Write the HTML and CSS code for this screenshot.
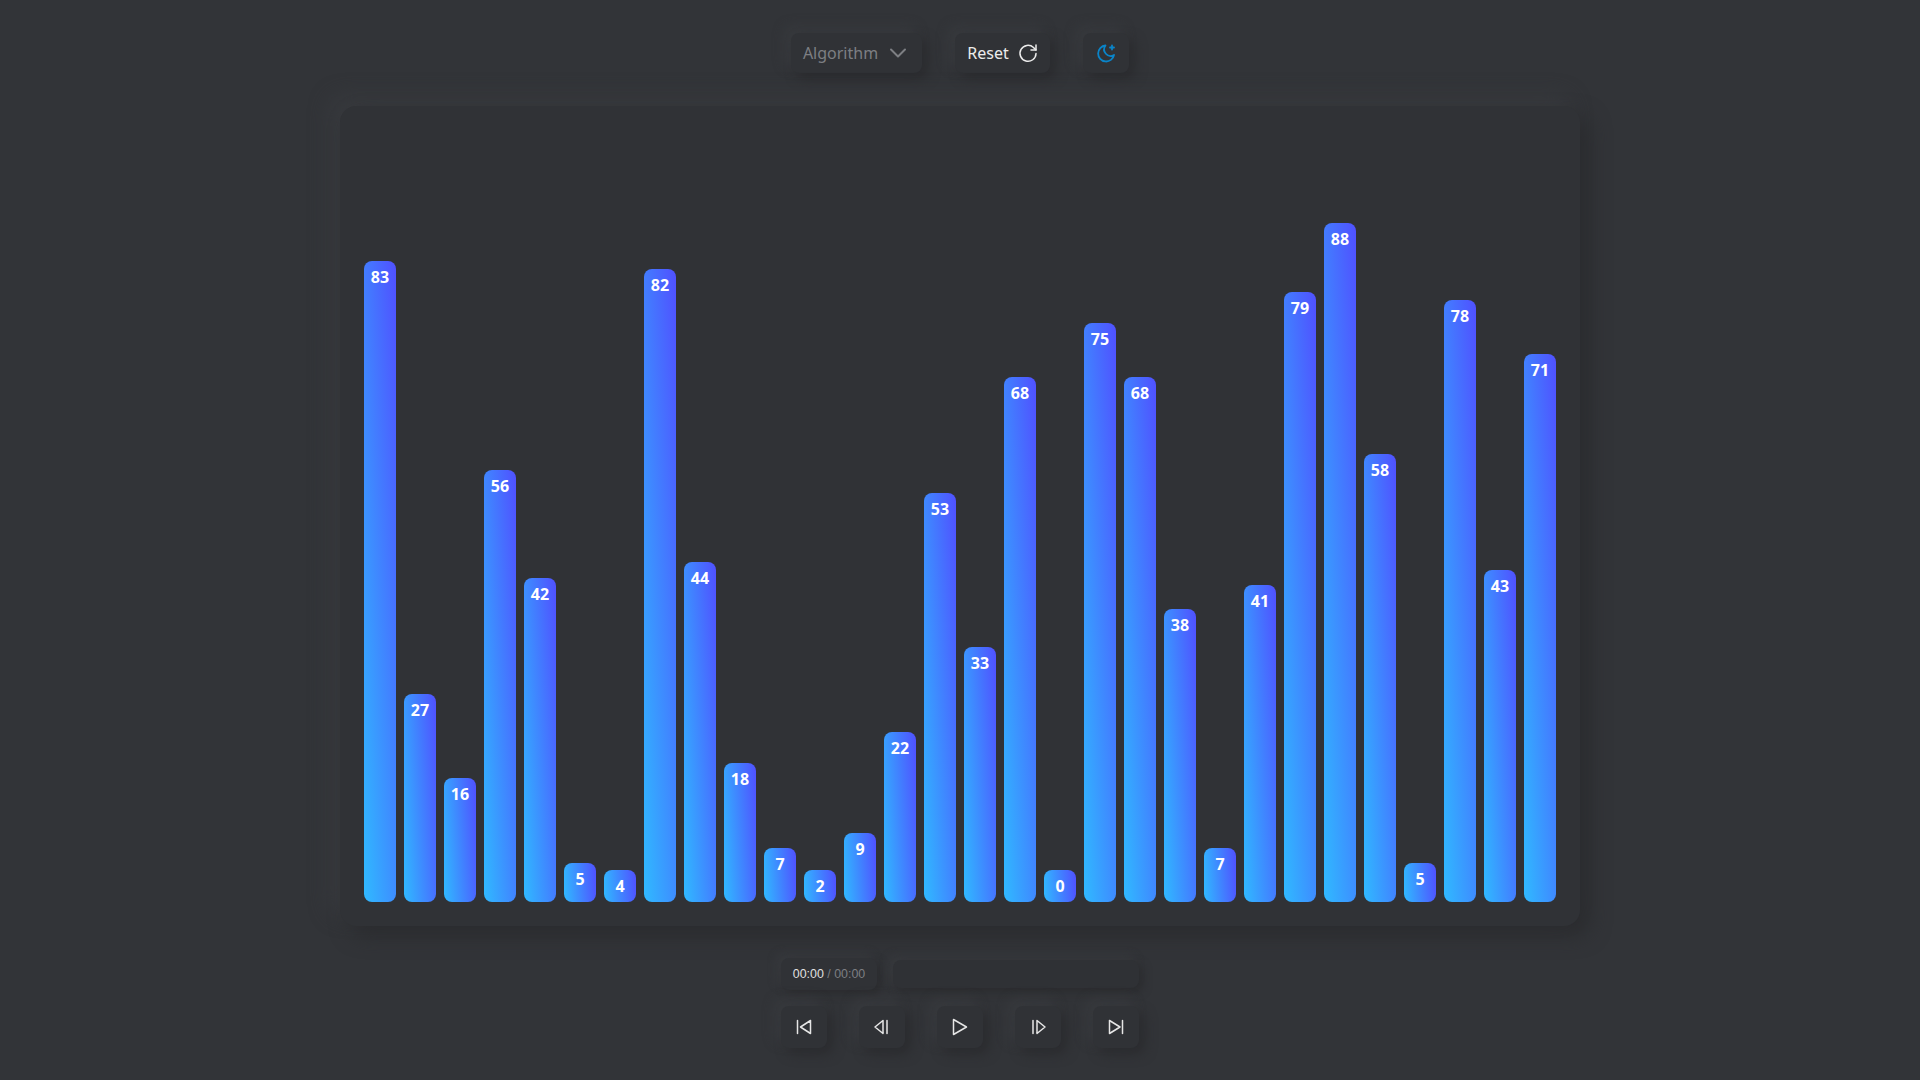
FILE: index.html
```html
<!doctype html>
<html lang="en">

<head>
    <title>Sorting Visualizer</title>
    <link rel="stylesheet" href="styles.css">
</head>

<body>
    <header class="toolbar">
        <div class="btn select">
            <span>Algorithm</span>
            <svg class="chevron" viewBox="0 0 24 24"><path d="M5 8.500l7 7 7-7" /></svg>
        </div>
        <div class="btn reset">
            <span>Reset</span>
            <svg class="reset-icon" viewBox="2 2 20 20">
                <path d="M20 12.500A8 8 0 1 1 17.500 6.500L20 9" />
                <path d="M20 4v5h-5" />
            </svg>
        </div>
        <div class="btn theme">
            <svg class="moon" viewBox="0 0 24 24">
                <path d="M11.500 4.500a8 8 0 1 0 8.500 9.500a6.500 6.500 0 0 1 -8.500 -9.500z" />
                <path d="M18 4.500v4M16 6.500h4" />
            </svg>
        </div>
    </header>

    <main class="panel" id="panel">
        <div class="bar" style="height:641px">83</div>
        <div class="bar" style="height:208px">27</div>
        <div class="bar" style="height:124px">16</div>
        <div class="bar" style="height:432px">56</div>
        <div class="bar" style="height:324px">42</div>
        <div class="bar" style="height:39px">5</div>
        <div class="bar" style="height:32px">4</div>
        <div class="bar" style="height:633px">82</div>
        <div class="bar" style="height:340px">44</div>
        <div class="bar" style="height:139px">18</div>
        <div class="bar" style="height:54px">7</div>
        <div class="bar" style="height:32px">2</div>
        <div class="bar" style="height:69px">9</div>
        <div class="bar" style="height:170px">22</div>
        <div class="bar" style="height:409px">53</div>
        <div class="bar" style="height:255px">33</div>
        <div class="bar" style="height:525px">68</div>
        <div class="bar" style="height:32px">0</div>
        <div class="bar" style="height:579px">75</div>
        <div class="bar" style="height:525px">68</div>
        <div class="bar" style="height:293px">38</div>
        <div class="bar" style="height:54px">7</div>
        <div class="bar" style="height:317px">41</div>
        <div class="bar" style="height:610px">79</div>
        <div class="bar" style="height:679px">88</div>
        <div class="bar" style="height:448px">58</div>
        <div class="bar" style="height:39px">5</div>
        <div class="bar" style="height:602px">78</div>
        <div class="bar" style="height:332px">43</div>
        <div class="bar" style="height:548px">71</div>
    </main>

    <footer class="player">
        <div class="progress-row">
            <div class="time"><span class="current">00:00</span> / 00:00</div>
            <div class="progress"></div>
        </div>
        <div class="controls">
            <div class="btn ctrl"><svg viewBox="0 0 24 24"><path d="M5.500 5.500v13M18.500 5.500v13l-10 -6.500z" /></svg></div>
            <div class="btn ctrl"><svg viewBox="0 0 24 24"><path d="M13 5.500v13l-8 -6.500zM17 5.500v13" /></svg></div>
            <div class="btn ctrl"><svg viewBox="0 0 24 24"><path d="M5.500 4.500v15l13 -7.500z" /></svg></div>
            <div class="btn ctrl"><svg viewBox="0 0 24 24"><path d="M11 5.500v13l8 -6.500zM7 5.500v13" /></svg></div>
            <div class="btn ctrl"><svg viewBox="0 0 24 24"><path d="M5.500 5.500v13l10.500 -6.500zM18.500 5.500v13" /></svg></div>
        </div>
    </footer>
</body>

</html>
```

FILE: styles.css
```css
* {
    box-sizing: border-box;
}

body {
    margin: 0;
    height: 1080px;
    overflow: hidden;
    background-color: #323438;
    font-family: "Noto Sans", sans-serif;
    color: #ececec;
    display: flex;
    flex-direction: column;
    align-items: center;
}

.btn {
    display: flex;
    align-items: center;
    justify-content: center;
    background-color: #303236;
    border-radius: 8px;
    box-shadow: 6px 6px 12px #2b2c2f, -6px -6px 12px #383a3e;
}

.btn svg {
    fill: none;
    stroke: currentColor;
    stroke-width: 1.5;
    stroke-linecap: round;
    stroke-linejoin: round;
}

/* top buttons */
.toolbar {
    display: flex;
    gap: 33px;
    height: 40px;
    margin-top: 33px;
    font-size: 16px;
}

.select {
    width: 131px;
    gap: 8px;
    color: #7d7f83;
}

.btn .chevron {
    width: 24px;
    height: 24px;
    stroke-width: 2;
}

.reset {
    width: 95px;
    gap: 9px;
}

.reset-icon {
    width: 20px;
    height: 20px;
}

.theme {
    width: 46px;
    color: #0a84c8;
}

.btn .moon {
    width: 24px;
    height: 24px;
    stroke-width: 1.8;
}

/* chart */
.panel {
    width: 1240px;
    height: 820px;
    margin-top: 33px;
    padding: 24px;
    display: flex;
    align-items: flex-end;
    gap: 8px;
    background-color: #303236;
    border-radius: 16px;
    box-shadow: 10px 10px 20px #2b2c2f, -10px -10px 20px #383a3e;
}

.bar {
    width: 32px;
    padding-top: 5px;
    text-align: center;
    font-size: 16px;
    font-weight: 700;
    line-height: 22px;
    color: #fff;
    border-radius: 8px;
    background-image: linear-gradient(86deg, #30baff, #5050ff);
}

/* player */
.player {
    width: 358px;
    margin-top: 32px;
}

.progress-row {
    display: flex;
    align-items: center;
    gap: 16px;
    height: 32px;
}

.time {
    width: 96px;
    height: 32px;
    line-height: 32px;
    text-align: center;
    font-family: "Liberation Sans", sans-serif;
    font-size: 12.4px;
    color: #7d7f83;
    background-color: #303236;
    border-radius: 8px;
    box-shadow: 4px 4px 8px #2b2c2f, -4px -4px 8px #383a3e;
}

.current {
    color: #e0e0e0;
}

.progress {
    flex: 1;
    height: 28px;
    background-color: #2f3135;
    border-radius: 8px;
    box-shadow: 4px 4px 8px #2b2c2f, -4px -4px 8px #383a3e;
}

.controls {
    display: flex;
    justify-content: space-between;
    margin-top: 16px;
}

.ctrl {
    width: 46px;
    height: 42px;
    color: #e6e6e6;
}

.ctrl svg {
    width: 24px;
    height: 24px;
}
```
